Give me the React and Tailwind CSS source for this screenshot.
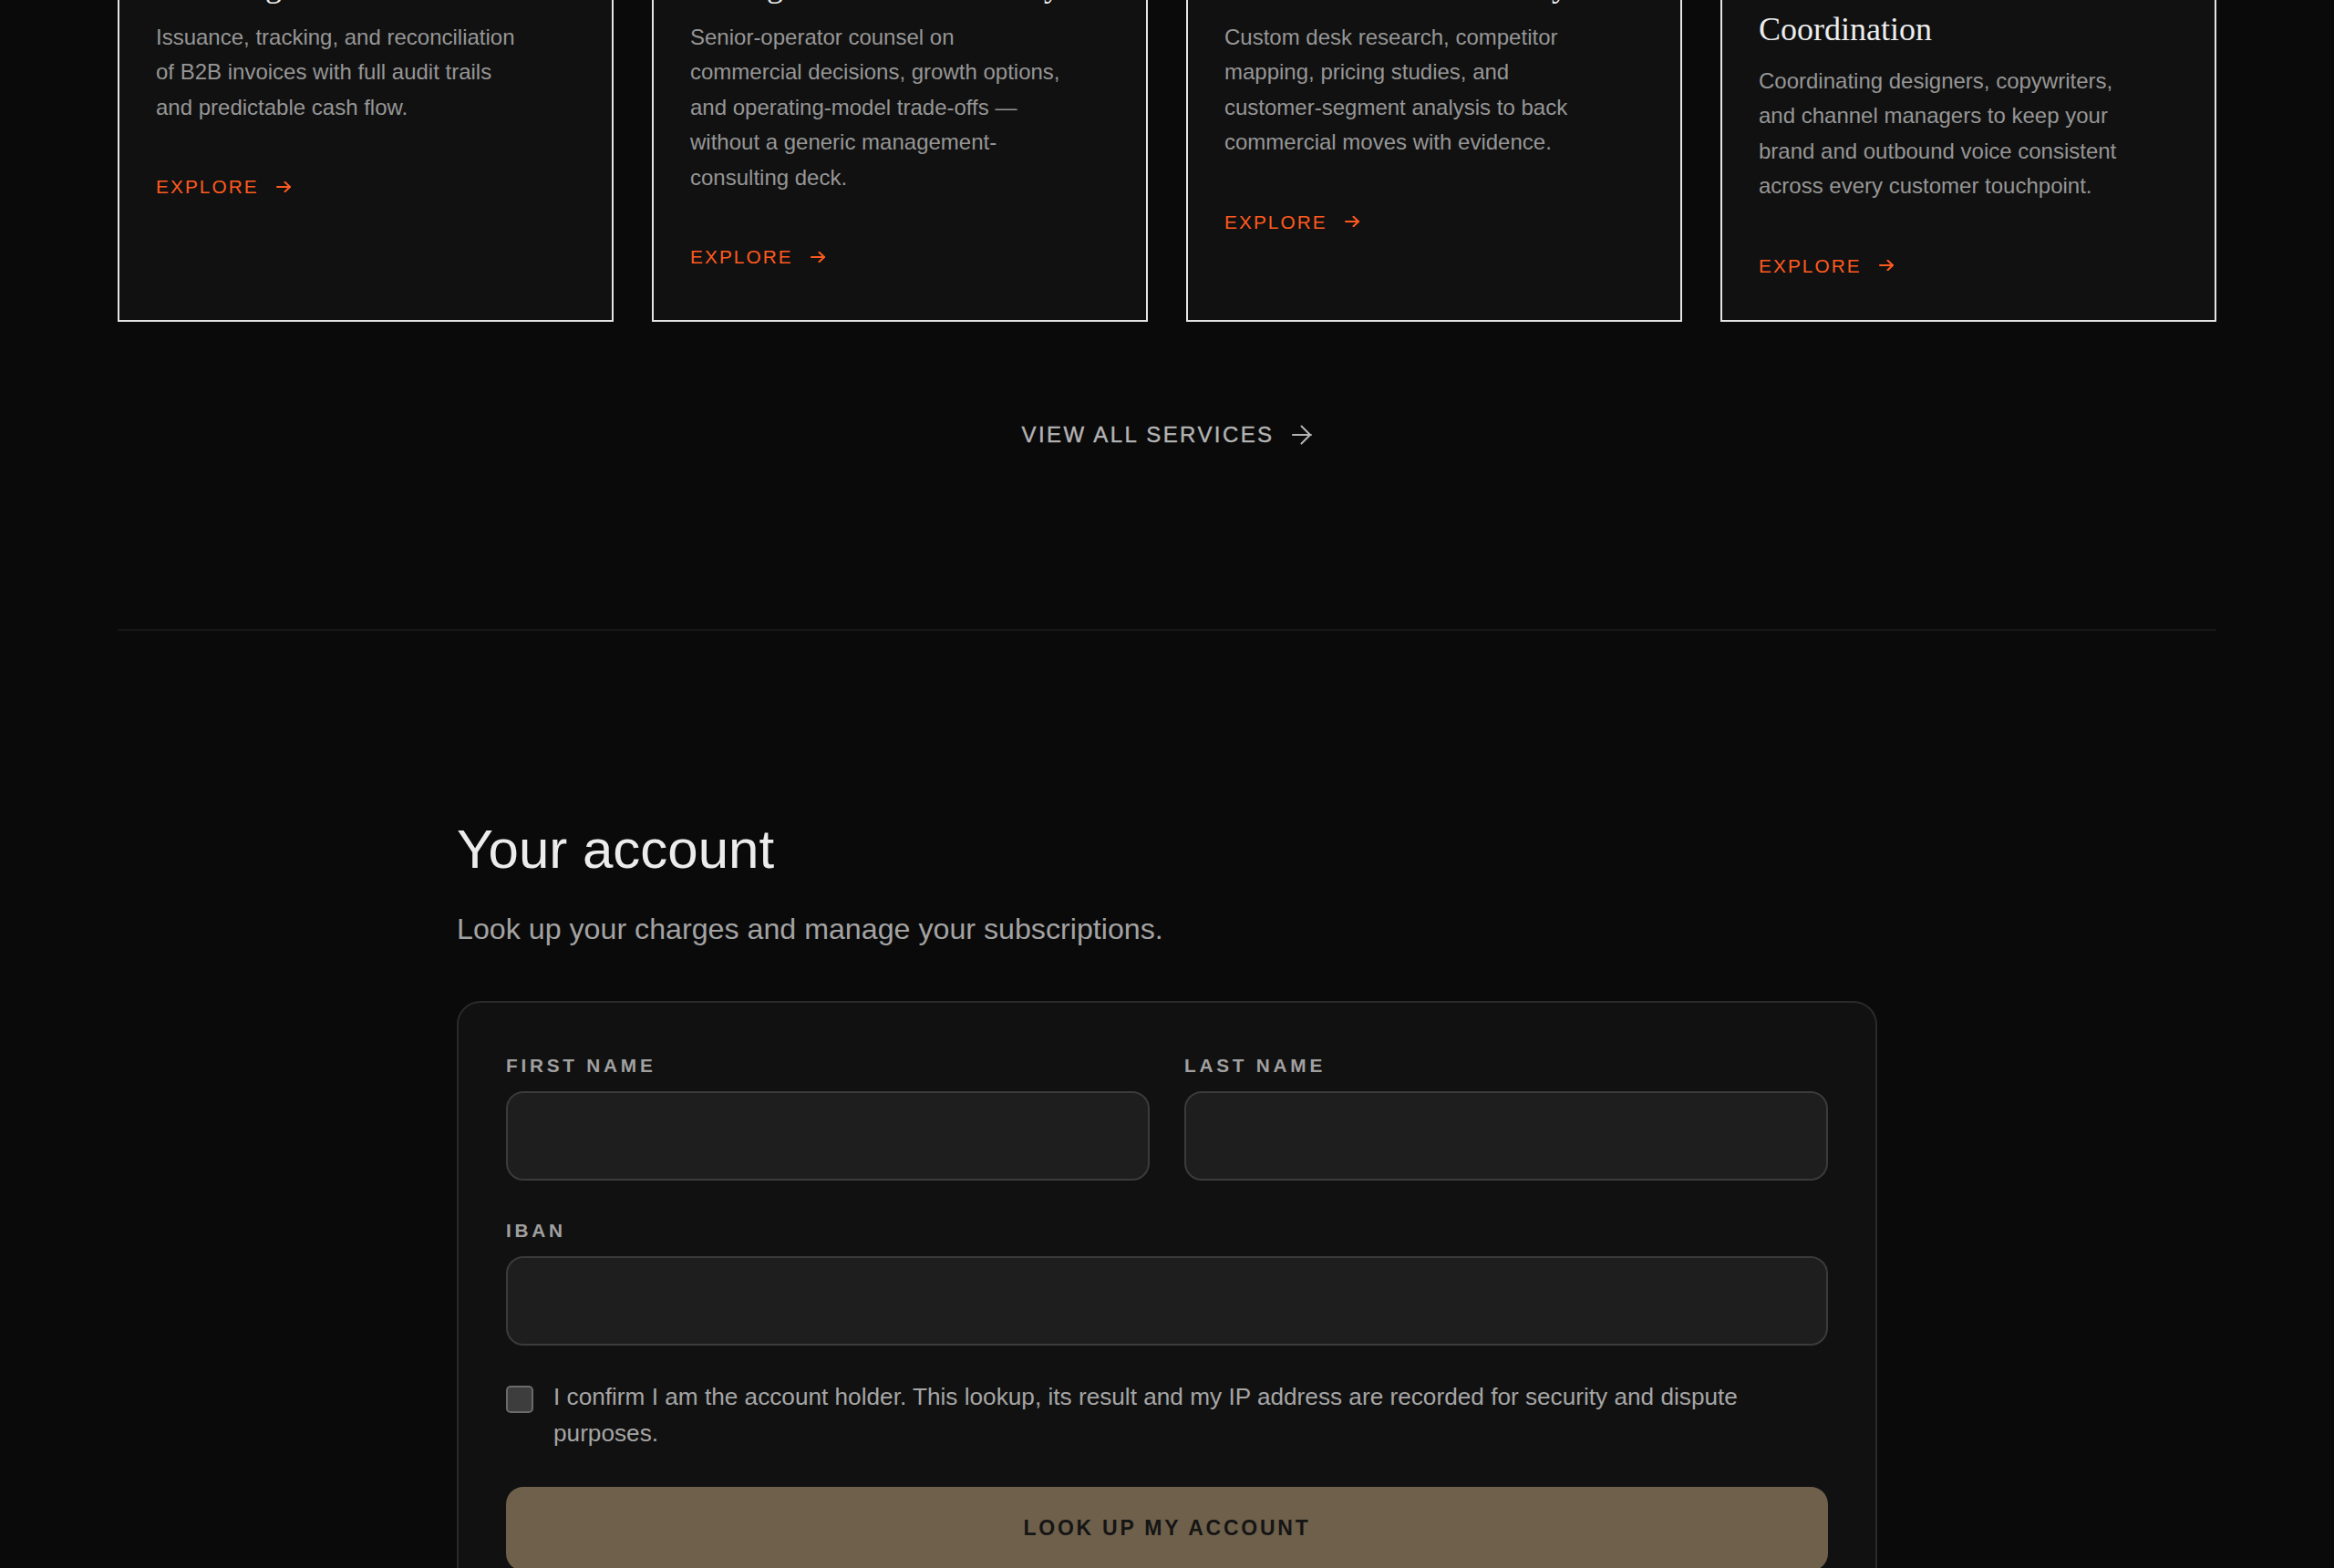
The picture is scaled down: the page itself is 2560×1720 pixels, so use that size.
import React from 'react';

const services = [
    {
        title: ['Invoicing'],
        text: 'Issuance, tracking, and reconciliation of B2B invoices with full audit trails and predictable cash flow.',
    },
    {
        title: ['Strategic Business Advisory'],
        text: 'Senior-operator counsel on commercial decisions, growth options, and operating-model trade-offs — without a generic management-consulting deck.',
    },
    {
        title: ['Market Research & Analysis'],
        text: 'Custom desk research, competitor mapping, pricing studies, and customer-segment analysis to back commercial moves with evidence.',
    },
    {
        title: ['Brand & Creative', 'Coordination'],
        text: 'Coordinating designers, copywriters, and channel managers to keep your brand and outbound voice consistent across every customer touchpoint.',
    },
];

const SmallArrow = () => (
    <svg width="16" height="12" viewBox="0 0 16 12" fill="none" stroke="currentColor" strokeWidth="2" strokeLinecap="round" strokeLinejoin="round">
        <path d="M1 6h14" />
        <path d="M9.5 0.8 15 6l-5.5 5.2" />
    </svg>
);

const BigArrow = () => (
    <svg width="22" height="22" viewBox="0 0 22 22" fill="none" stroke="currentColor" strokeWidth="2" strokeLinecap="round" strokeLinejoin="round">
        <path d="M1 11h20" />
        <path d="M10.5 1.5 20 11l-9.5 9.5" />
    </svg>
);

const ServiceCard = ({ title, text }) => (
    <div className="border-2 border-[#e4e4e4] bg-[#111111] px-10 pt-10 pb-[44px]">
        <h3 className="font-['Liberation_Serif','Times_New_Roman',serif] text-[36px] leading-[48px] text-[#ececec]">
            {title.map((line) => (
                <span key={line} className="block">{line}</span>
            ))}
        </h3>
        <p className="mt-[14px] max-w-[410px] text-[24px] leading-[38.4px] text-[#969696]">{text}</p>
        <a href="#" className="mt-[52px] inline-flex items-center gap-[19px] text-[20.8px] leading-[31px] tracking-[0.1em] text-[#ff5a1f]">
            EXPLORE
            <SmallArrow />
        </a>
    </div>
);

const Field = ({ label, className = '' }) => (
    <div className={className}>
        <label className="block text-[20.8px] leading-[31px] font-bold tracking-[0.18em] text-[#a0a0a0]">{label}</label>
        <input
            type="text"
            className="mt-[13px] block h-[98px] w-full rounded-[19px] border-2 border-[#3b3b3b] bg-[#1e1e1e] px-6 text-[25px] text-[#e5e5e5] outline-none"
        />
    </div>
);

export default function App() {
    return (
        <div className="min-h-screen overflow-hidden bg-[#0a0a0a] font-['Liberation_Sans',Arial,sans-serif]">
            {/* services */}
            <section className="px-[129px]">
                <div className="-mt-[82px] grid grid-cols-4 gap-[42px]">
                    {services.map((s) => (
                        <ServiceCard key={s.text} title={s.title} text={s.text} />
                    ))}
                </div>
                <div className="mt-[106px] flex justify-center">
                    <a href="#" className="inline-flex items-center gap-[20px] text-[24px] leading-[36px] tracking-[0.1em] text-[#b4b4b4] [-webkit-text-stroke:0.4px_#b4b4b4]">
                        VIEW ALL SERVICES
                        <BigArrow />
                    </a>
                </div>
                <div className="mt-[195px] h-[2px] bg-[#171717]" />
            </section>

            {/* account lookup */}
            <section className="mx-auto w-[1558px] pt-[208px] pb-[120px]">
                <h2 className="text-[60px] leading-[64px] text-[#ececec]">Your account</h2>
                <p className="mt-[31px] text-[32.2px] leading-[48px] text-[#a3a3a3]">
                    Look up your charges and manage your subscriptions.
                </p>

                <form className="mt-[55px] rounded-[26px] border-2 border-[#2a2a2a] bg-[#111111] px-[52px] pt-[53px] pb-[52px]">
                    <div className="grid grid-cols-2 gap-x-[38px]">
                        <Field label="FIRST NAME" />
                        <Field label="LAST NAME" />
                    </div>
                    <Field label="IBAN" className="mt-[39px]" />

                    <label className="mt-[36px] flex items-start gap-[22px]">
                        <input
                            type="checkbox"
                            className="mt-[8px] h-[30px] w-[30px] shrink-0 appearance-none rounded-[5px] border-2 border-[#6b6b6b] bg-[#3d3d3d]"
                        />
                        <span className="max-w-[1350px] text-[26.2px] leading-[40px] text-[#a5a5a5]">
                            I confirm I am the account holder. This lookup, its result and my IP address are recorded for security and dispute purposes.
                        </span>
                    </label>

                    <button
                        type="button"
                        className="mt-[39px] flex h-[92px] w-full items-center justify-center rounded-[19px] bg-[#6f604b] text-[23px] font-bold tracking-[0.12em] text-[#151515]"
                    >
                        LOOK UP MY ACCOUNT
                    </button>
                </form>
            </section>
        </div>
    );
}
